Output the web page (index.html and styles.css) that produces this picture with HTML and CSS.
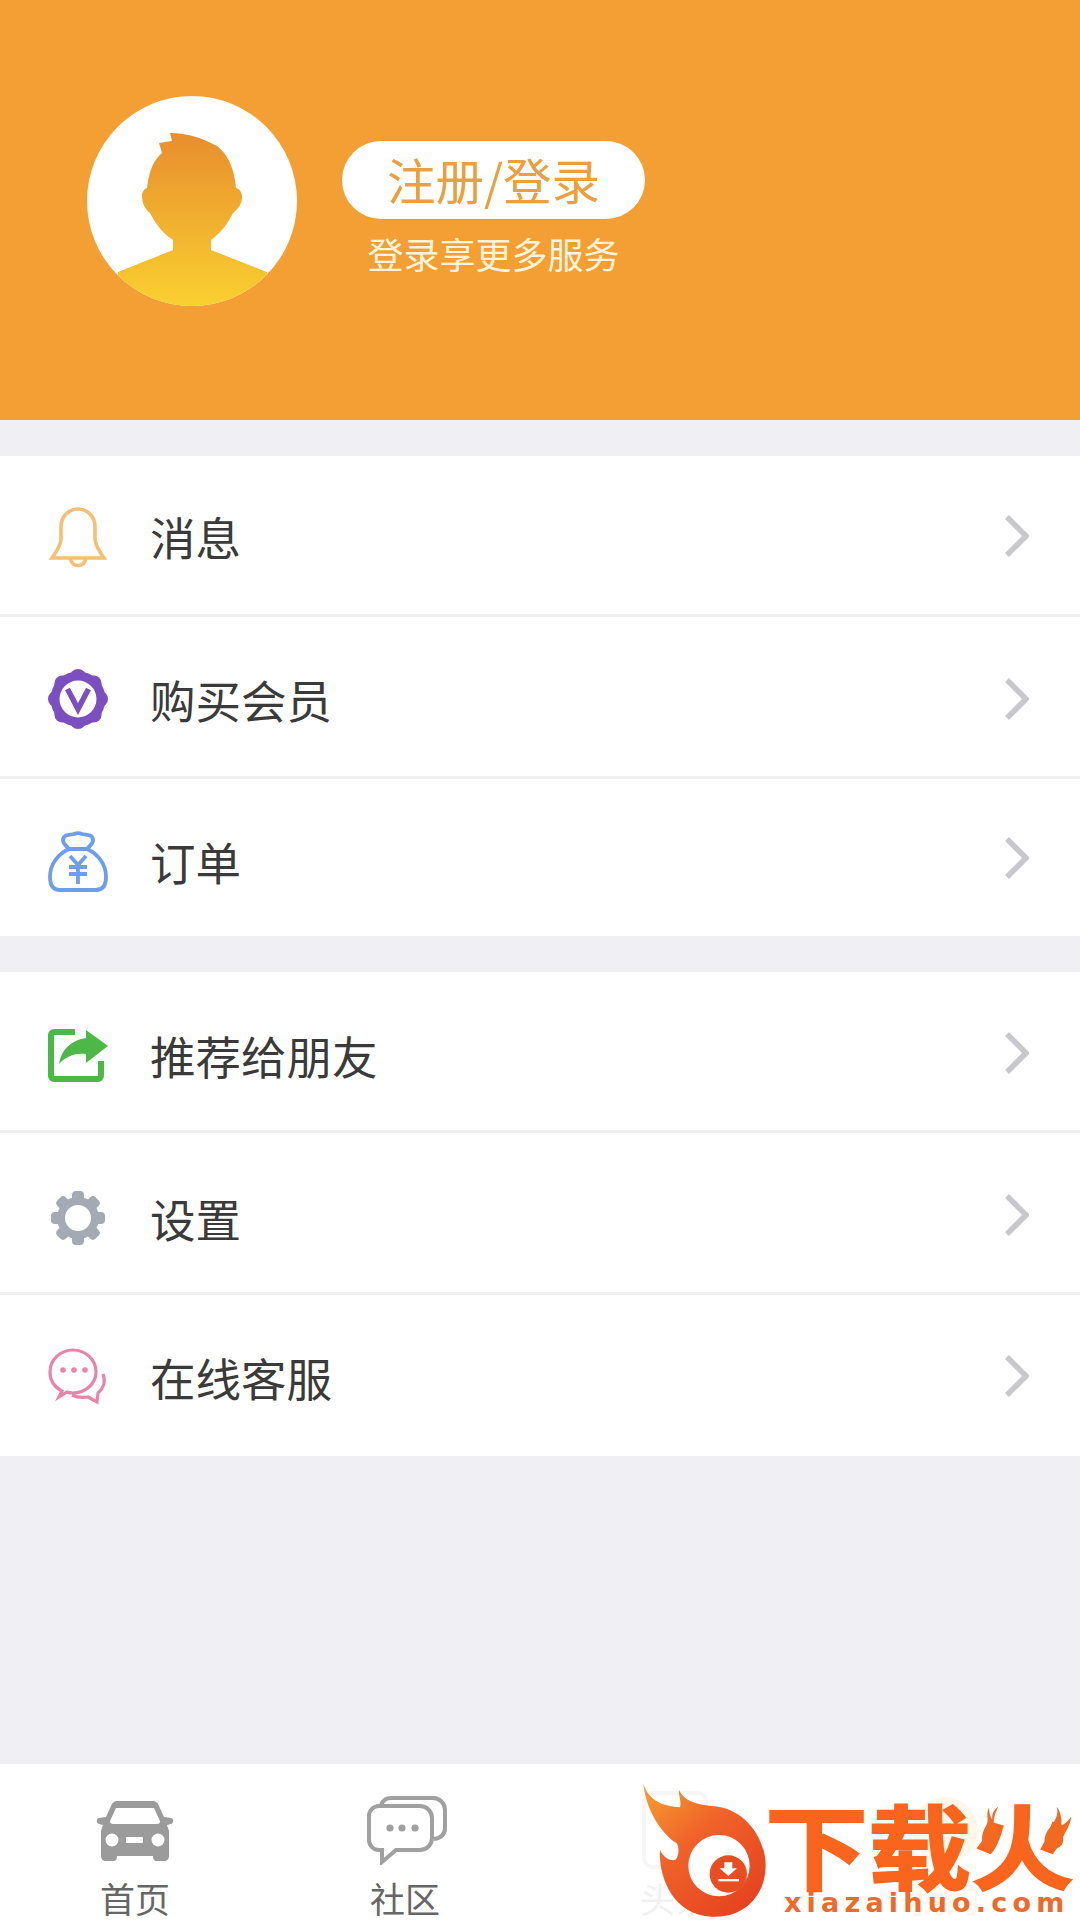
FILE: index.html
```
<!DOCTYPE html>
<html lang="zh">
<head>
<meta charset="utf-8">
<title>我的</title>
<link rel="stylesheet" href="styles.css">
</head>
<body>
<div class="page">
  <header class="hero">
    <svg class="avatar" viewBox="0 0 210 210">
      <defs>
        <linearGradient id="skin" x1="0" y1="0" x2="0" y2="1">
          <stop offset="0" stop-color="#E88E2E"/>
          <stop offset="1" stop-color="#FAD230"/>
        </linearGradient>
        <clipPath id="disc"><circle cx="105" cy="105" r="105"/></clipPath>
      </defs>
      <circle cx="105" cy="105" r="105" fill="#fff"/>
      <path clip-path="url(#disc)" fill="url(#skin)" d="M83 37 C100 37 115 42 130 50 C140 58 147 70 149 92 C153 93 155 97 155 101 C155 108 151 113 146 117 C141 127 135 136 124 144 V154 L180 176 L185 215 H25 L31 176 L86 154 V144 C75 137 69 128 63 117 C58 113 55 107 55 100 C55 96 57 93 60 92 C62 75 66 65 75 57 L72 47 L85 45Z"/>
    </svg>
    <div class="account">
      <div class="login-pill">注册/登录</div>
      <div class="login-hint">登录享更多服务</div>
    </div>
  </header>

  <section class="menu menu-a">
    <a class="row row-msg">
      <svg class="row-icon" viewBox="0 2 60 60"><path d="M30 4 C20 4 13 12 13 22 V34 C13 40 9 46 4 53 H56 C51 46 47 40 47 34 V22 C47 12 40 4 30 4Z M22 53 C23 58 26 60.5 30 60.5 C34 60.5 37 58 38 53" fill="none" stroke="#F5BF74" stroke-width="3.6"/></svg>
      <span class="row-label">消息</span>
      <svg class="chevron" viewBox="0 0 24 42"><path d="M2 2 L21 21 L2 40" fill="none" stroke="#C8C8CC" stroke-width="5.5"/></svg>
    </a>
    <a class="row row-vip">
      <svg class="row-icon" viewBox="0 0 60 60">
        <g fill="#7B4FBF">
          <circle cx="30" cy="30" r="27.5"/>
          <circle cx="30" cy="8" r="8"/><circle cx="45.6" cy="14.4" r="8"/>
          <circle cx="52" cy="30" r="8"/><circle cx="45.6" cy="45.6" r="8"/>
          <circle cx="30" cy="52" r="8"/><circle cx="14.4" cy="45.6" r="8"/>
          <circle cx="8" cy="30" r="8"/><circle cx="14.4" cy="14.4" r="8"/>
        </g>
        <circle cx="30" cy="30" r="18.5" fill="#fff"/>
        <path d="M19.5 20 L30 40 L40.5 20" fill="none" stroke="#7B4FBF" stroke-width="5.5"/>
      </svg>
      <span class="row-label">购买会员</span>
      <svg class="chevron" viewBox="0 0 24 42"><path d="M2 2 L21 21 L2 40" fill="none" stroke="#C8C8CC" stroke-width="5.5"/></svg>
    </a>
    <a class="row row-order">
      <svg class="row-icon" viewBox="0 0 60 60"><path d="M21 17 C17 13 13 9 16 5 C18 2 23 3 26 2 C28 1 32 1 34 2 C37 3 42 2 44 5 C47 9 43 13 39 17 C50 22 58 32 58 45 C58 54 54 58 48 58 H12 C6 58 2 54 2 45 C2 32 10 22 21 17Z M21 17 H39" fill="none" stroke="#6D9EEB" stroke-width="3.8"/><path d="M22 24 L30 33 L38 24 M21 35 H39 M21 42 H39 M30 33 V52" fill="none" stroke="#6D9EEB" stroke-width="3.8"/></svg>
      <span class="row-label">订单</span>
      <svg class="chevron" viewBox="0 0 24 42"><path d="M2 2 L21 21 L2 40" fill="none" stroke="#C8C8CC" stroke-width="5.5"/></svg>
    </a>
  </section>

  <section class="menu menu-b">
    <a class="row row-share">
      <svg class="row-icon" viewBox="0 -3 60 60"><path d="M27 3 H6 A3 3 0 0 0 3 6 V47 A3 3 0 0 0 6 50 H50 A3 3 0 0 0 53 47 V32" fill="none" stroke="#4DB848" stroke-width="6"/><path fill="#4DB848" d="M38 1 L60 17 L38 34 V25 C28 24 18 27 11 35 C13 20 24 11 38 9Z"/></svg>
      <span class="row-label">推荐给朋友</span>
      <svg class="chevron" viewBox="0 0 24 42"><path d="M2 2 L21 21 L2 40" fill="none" stroke="#C8C8CC" stroke-width="5.5"/></svg>
    </a>
    <a class="row row-set">
      <svg class="row-icon" viewBox="0 0 60 60">
        <g fill="#A3AAB3">
          <circle cx="30" cy="30" r="21"/>
          <rect x="24" y="3" width="12" height="54" rx="4"/>
          <rect x="24" y="3" width="12" height="54" rx="4" transform="rotate(45 30 30)"/>
          <rect x="24" y="3" width="12" height="54" rx="4" transform="rotate(90 30 30)"/>
          <rect x="24" y="3" width="12" height="54" rx="4" transform="rotate(135 30 30)"/>
        </g>
        <circle cx="30" cy="30" r="13" fill="#fff"/>
      </svg>
      <span class="row-label">设置</span>
      <svg class="chevron" viewBox="0 0 24 42"><path d="M2 2 L21 21 L2 40" fill="none" stroke="#C8C8CC" stroke-width="5.5"/></svg>
    </a>
    <a class="row row-help">
      <svg class="row-icon" viewBox="0 0 60 60"><path d="M14 44 C6 40 2 33 2 25 C2 12 13 3 25 3 C37 3 48 12 48 25 C48 37 37 46 25 46 C23 46 21 46 19 45 L11 50Z M55 27 C58 35 55 42 50 46 L49 55 L40 50 C34 51 28 50 24 48" fill="none" stroke="#E884AC" stroke-width="3.2"/><g fill="#E884AC"><circle cx="15" cy="23" r="2.8"/><circle cx="26" cy="23" r="2.8"/><circle cx="37" cy="23" r="2.8"/></g></svg>
      <span class="row-label">在线客服</span>
      <svg class="chevron" viewBox="0 0 24 42"><path d="M2 2 L21 21 L2 40" fill="none" stroke="#C8C8CC" stroke-width="5.5"/></svg>
    </a>
  </section>

  <nav class="tabbar">
    <a class="tab">
      <span class="tab-icon">
        <svg class="car" viewBox="0 0 78 60"><path fill="#9B9B9B" d="M22 0 H56 C60 0 62 2 63 5 L68 16 L75 17 C78 18 78 22 75 23 L71 24 L73 30 V55 C73 58 71 60 68 60 H61 C58 60 57 58 57 55 H21 C21 58 20 60 17 60 H10 C7 60 5 58 5 55 V30 L7 24 L3 23 C0 22 0 18 3 17 L10 16 L15 5 C16 2 18 0 22 0Z"/><path fill="#fff" d="M20 7 H58 L64 20 C64 22 63 23 61 23 H17 C15 23 14 22 14 20Z"/><circle cx="16" cy="39" r="6.5" fill="#fff"/><circle cx="62" cy="39" r="6.5" fill="#fff"/><rect x="30" y="36" width="17" height="6" rx="1" fill="#fff"/></svg>
      </span>
      <span class="tab-label">首页</span>
    </a>
    <a class="tab">
      <span class="tab-icon">
        <svg class="bubbles" viewBox="0 0 80 69"><path d="M12 10 H53 A12 12 0 0 1 65 22 V42 A12 12 0 0 1 53 54 H29 L15 66 V54 H12 A10 10 0 0 1 2 44 V20 A10 10 0 0 1 12 10Z M14 9 C16 4 20 2 24 2 H66 A12 12 0 0 1 78 14 V32 C78 38 74 42 67 43" fill="none" stroke="#A0A0A0" stroke-width="4"/><g fill="#A0A0A0"><circle cx="23" cy="32" r="3.6"/><circle cx="35" cy="32" r="3.6"/><circle cx="48" cy="32" r="3.6"/></g></svg>
      </span>
      <span class="tab-label">社区</span>
    </a>
    <a class="tab">
      <span class="tab-icon">
        <svg class="news" viewBox="0 0 66 78"><rect x="2" y="2" width="62" height="74" rx="8" fill="none" stroke="#A0A0A0" stroke-width="4"/><path d="M14 22 H52 M14 36 H52" stroke="#A0A0A0" stroke-width="4"/></svg>
      </span>
      <span class="tab-label">头条</span>
    </a>
    <a class="tab">
      <span class="tab-icon">
        <svg class="mine" viewBox="0 0 70 70"><circle cx="35" cy="35" r="33" fill="#F6B33A"/></svg>
      </span>
      <span class="tab-label tab-label-on">我的</span>
    </a>

    <div class="watermark">
      <svg class="flame" viewBox="0 0 435 435">
        <defs>
          <linearGradient id="burn" x1="0" y1="0" x2="0.8" y2="1">
            <stop offset="0" stop-color="#F7A12F"/>
            <stop offset="0.45" stop-color="#F0622A"/>
            <stop offset="1" stop-color="#E5421F"/>
          </linearGradient>
        </defs>
        <path fill="url(#burn)" d="M25 25 C30 90 70 170 125 205 C135 220 130 250 120 255 C100 258 85 245 75 225 C70 300 110 420 230 425 C330 430 392 360 392 270 C392 200 340 110 250 95 C200 90 150 85 132 45 C130 60 140 80 135 97 C90 95 40 80 25 25Z"/>
        <circle cx="252" cy="272" r="92" fill="#fff"/>
        <circle cx="280" cy="297" r="56" fill="#E84E22"/>
        <path fill="#fff" d="M268 262 H292 V280 H306 L280 303 L254 280 H268Z"/>
        <rect x="250" y="312" width="62" height="7" fill="#fff"/>
      </svg>
      <div class="brand">
        <div class="brand-cn">下载火</div>
        <div class="brand-en">xiazaihuo.com</div>
        <svg class="spark spark-left" viewBox="235 100 60 140"><path fill="#F06A22" d="M262 108 C250 130 265 145 252 165 C238 190 235 215 255 235 C275 245 290 225 288 200 C285 175 270 165 280 130 C283 120 288 110 290 105 C275 115 270 130 272 145 C265 135 262 120 262 108Z"/></svg>
        <svg class="spark spark-right" viewBox="418 100 90 135"><path fill="#F06A22" d="M462 105 C470 130 455 150 440 170 C420 195 420 225 445 232 C470 235 490 215 478 190 C495 175 505 150 505 135 C495 150 485 155 475 165 C478 145 475 120 462 105Z"/></svg>
      </div>
    </div>
  </nav>
</div>
</body>
</html>
```

FILE: styles.css
```
* { box-sizing: border-box; }
html, body { margin: 0; padding: 0; }
body {
  width: 1080px;
  height: 1920px;
  overflow: hidden;
  background: #EFEFF4;
  font-family: "Noto Sans CJK SC", "Noto Sans", sans-serif;
}
.page {
  display: flex;
  flex-direction: column;
  height: 1920px;
}

/* header */
.hero {
  flex: none;
  display: flex;
  align-items: flex-start;
  gap: 45px;
  height: 420px;
  padding: 96px 0 0 87px;
  background: #F39F33;
}
.avatar { flex: none; width: 210px; height: 210px; }
.account {
  display: flex;
  flex-direction: column;
  align-items: center;
  margin-top: 45px;
}
.login-pill {
  width: 303px;
  height: 78px;
  border-radius: 39px;
  background: #fff;
  color: #EC9F3C;
  font-size: 48.5px;
  line-height: 76px;
  text-align: center;
}
.login-hint {
  margin-top: 9px;
  color: #FFF3DC;
  font-size: 36px;
  line-height: 50px;
}

/* menu lists */
.menu {
  flex: none;
  display: grid;
  margin-top: 36px;
  background: #fff;
}
.menu-a { grid-template-rows: 161px 162px 157px; }
.menu-b { grid-template-rows: 161px 162px 161px; }
.row {
  --icon-shift: 0px;
  --text-shift: 0px;
  --chev-shift: 0px;
  display: flex;
  align-items: center;
  padding: 0 51px 0 48px;
  border-bottom: 3px solid #F0F0F0;
  color: #3A3A3A;
}
.row:last-child { border-bottom: 0; }
.row-msg   { --icon-shift: 3px;  --text-shift: 1px;  --chev-shift: 1px; }
.row-vip   { --icon-shift: 4px;  --text-shift: 4px;  --chev-shift: 4px; }
.row-order { --icon-shift: 8px;  --text-shift: 7px;  --chev-shift: 1px; }
.row-share { --icon-shift: 9px;  --text-shift: 7px;  --chev-shift: 3px; }
.row-set   { --icon-shift: 10px; --text-shift: 10px; --chev-shift: 4px; }
.row-help  { --icon-shift: 3px;  --text-shift: 3px;  --chev-shift: 1px; }
.row-icon {
  flex: none;
  width: 60px;
  height: 60px;
  margin-top: var(--icon-shift);
  overflow: visible;
}
.row-label {
  flex: 1;
  margin: var(--text-shift) 0 0 42px;
  font-size: 45.5px;
  line-height: 60px;
}
.chevron {
  flex: none;
  width: 24px;
  height: 42px;
  margin-top: var(--chev-shift);
}

/* bottom tabs */
.tabbar {
  position: relative;
  flex: none;
  display: grid;
  grid-template-columns: repeat(4, 1fr);
  height: 156px;
  margin-top: auto;
  padding-top: 31px;
  background: #fff;
}
.tab {
  display: flex;
  flex-direction: column;
  align-items: center;
}
.tab-icon {
  display: flex;
  align-items: center;
  justify-content: center;
  height: 70px;
}
.car { width: 80px; height: 60px; margin-top: 2px; }
.bubbles { width: 80px; height: 69px; margin-left: 3px; }
.news { width: 66px; height: 78px; }
.mine { width: 70px; height: 70px; }
.tab-label {
  margin-top: 12px;
  color: #666;
  font-size: 35px;
  line-height: 42px;
}
.tab-label-on { color: #F39F33; }

/* site watermark laid over the tab bar */
.watermark {
  position: absolute;
  top: 11px;
  right: 0;
  bottom: 0;
  display: flex;
  align-items: flex-start;
  width: 445px;
  background: rgba(255, 255, 255, 0.9);
}
.flame { flex: none; width: 145px; height: 145px; }
.brand {
  position: relative;
  margin: 24px 0 0 -15px;
  color: #F9651C;
}
.brand-cn {
  height: 87px;
  font-size: 100px;
  font-weight: 700;
  line-height: 96px;
  white-space: nowrap;
  -webkit-text-stroke: 2px #F9651C;
  transform: scale(1.03, 0.92);
  transform-origin: left top;
}
.brand-en {
  margin-left: 19px;
  color: #EE6A2A;
  font-family: "DejaVu Sans", sans-serif;
  font-size: 27px;
  font-weight: 700;
  line-height: 34px;
  letter-spacing: 5.2px;
  white-space: nowrap;
}
.spark { position: absolute; top: 6px; }
.spark-left { left: 215px; width: 20px; height: 46px; }
.spark-right { left: 277px; width: 30px; height: 45px; }
```
